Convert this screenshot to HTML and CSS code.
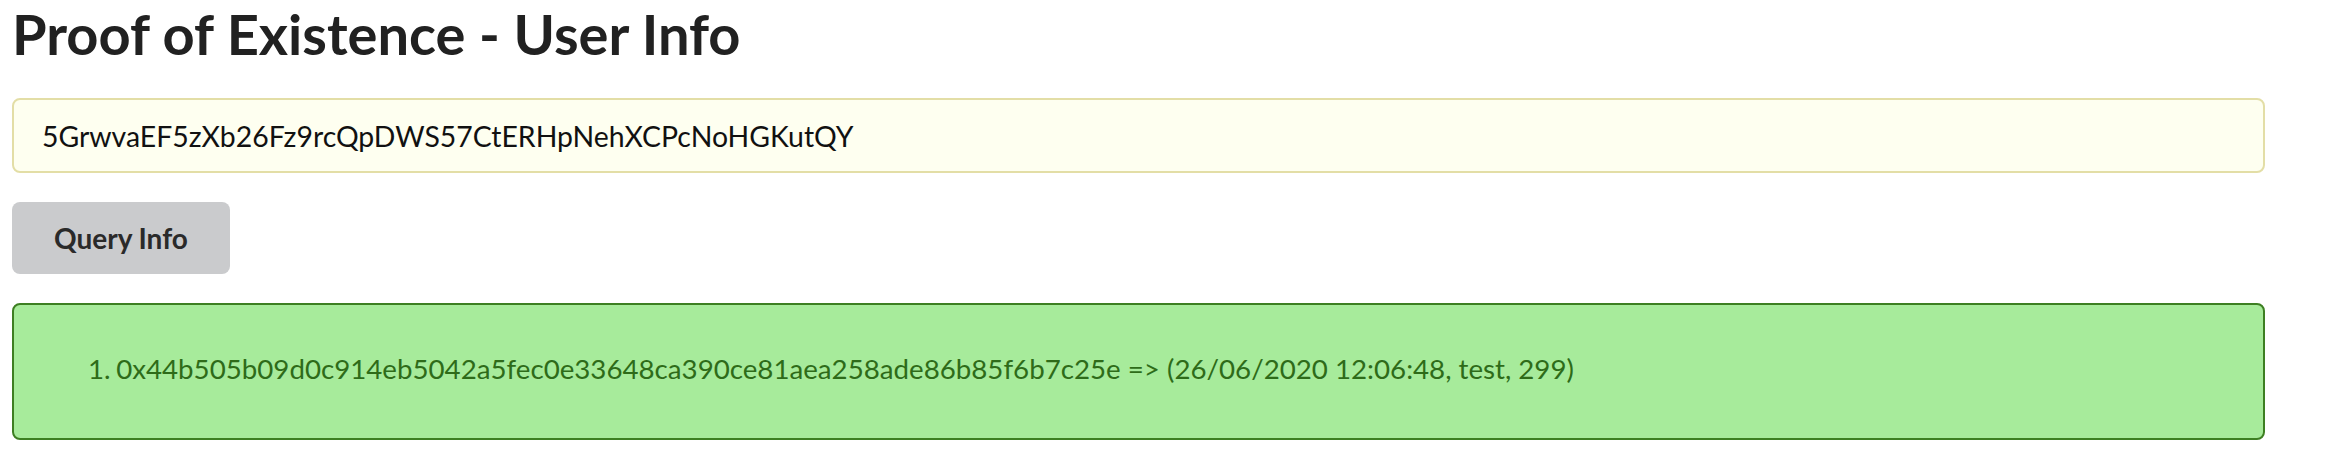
FILE: index.html
```html
<!DOCTYPE html>
<html>
<head>
<meta charset="utf-8">
<link rel="stylesheet" href="styles.css">
</head>
<body>
<main class="page">
  <h1 class="title">Proof of Existence - User Info</h1>
  <div class="field">
    <input class="address" type="text" value="5GrwvaEF5zXb26Fz9rcQpDWS57CtERHpNehXCPcNoHGKutQY">
  </div>
  <div class="actions">
    <button class="btn" type="button">Query Info</button>
  </div>
  <div class="message">
    <ol class="results">
      <li class="result">0x44b505b09d0c914eb5042a5fec0e33648ca390ce81aea258ade86b85f6b7c25e =&gt; (26/06/2020 12:06:48, test, 299)</li>
    </ol>
  </div>
</main>
</body>
</html>
```

FILE: styles.css
```css
html, body {
  margin: 0;
  padding: 0;
  background: #ffffff;
}

.page {
  padding: 0 61px 0 12px;
  font-family: "Lato", "Open Sans", sans-serif;
  color: rgba(0, 0, 0, 0.87);
}

.title {
  margin: 0 0 30px 0;
  font-size: 56px;
  line-height: 68px;
  font-weight: 700;
  color: #212121;
}

.field {
  display: flex;
}

.address {
  flex: 1;
  box-sizing: border-box;
  height: 75px;
  margin: 0;
  padding: 0 28px;
  border: 2px solid #e3dea6;
  border-radius: 8px;
  background: #fefff0;
  font-family: "Lato", sans-serif;
  font-size: 28.4px;
  color: #111111;
  outline: none;
}

.actions {
  display: flex;
  padding-top: 29px;
}

.btn {
  box-sizing: border-box;
  height: 72px;
  padding: 0 42px;
  border: none;
  border-radius: 8px;
  background: #cacbcd;
  font-family: "Lato", sans-serif;
  font-weight: 700;
  font-size: 28px;
  color: #2a2a2a;
}

.message {
  box-sizing: border-box;
  margin-top: 29px;
  height: 137px;
  padding: 44px 0 0 74px;
  border: 2px solid #3d7f22;
  border-radius: 8px;
  background: #a7eb9b;
  color: #2e6b19;
}

.results {
  margin: 0;
  padding: 0;
  list-style: none;
  counter-reset: item;
  font-size: 27.7px;
  line-height: 40px;
}

.result {
  counter-increment: item;
}

.result::before {
  content: counter(item) ".";
  margin-right: 0.2em;
}
```
